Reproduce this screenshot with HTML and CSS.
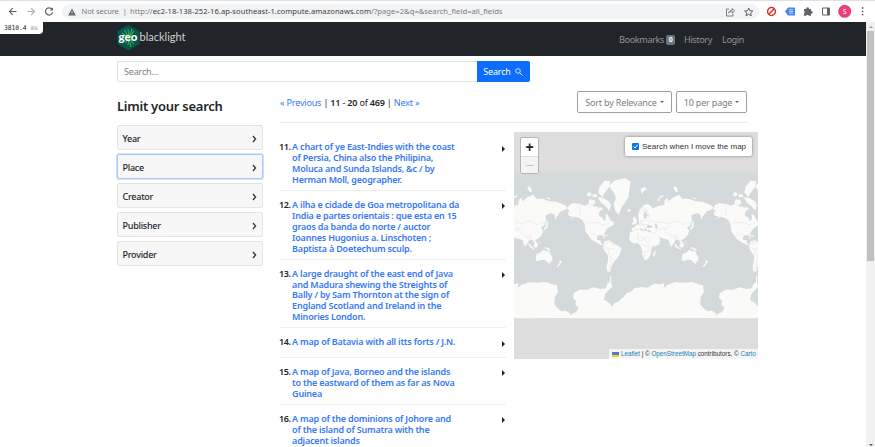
FILE: index.html
```html
<!DOCTYPE html>
<html lang="en">
<head>
<meta charset="utf-8">
<title>GeoBlacklight</title>
<link rel="stylesheet" href="styles.css">
</head>
<body>
<header class="chrome">
  <svg class="nav-icons" width="62" height="22" viewBox="0 0 62 22" fill="none" stroke="#5f6368" stroke-width="1.2"><path d="M16.5 11.5H9.5M12.8 8.2l-3.3 3.3 3.3 3.3"/><path stroke="#aeb1b4" d="M27.5 11.5h7M31.2 8.2l3.3 3.3-3.3 3.3"/><path d="M52 9.3a3.6 3.6 0 1 0 .6 3"/><path d="M53 7.2v3.2h-3.2z" fill="#5f6368" stroke="none"/></svg>
  <div class="address">
    <svg width="8" height="8" viewBox="0 0 8 8"><path fill="#5f6368" d="M4 .4 7.8 7.4H.2z"/><path stroke="#f1f3f4" stroke-width=".8" d="M4 3v2M4 5.8v.8"/></svg>
    <span class="insecure">Not secure</span><span class="bar">|</span>
    <span class="url">http://<b>ec2-18-138-252-16.ap-southeast-1.compute.amazonaws.com</b>/?page=2&amp;q=&amp;search_field=all_fields</span>
    <svg class="address-icons" width="30" height="12" viewBox="0 0 30 12" fill="none" stroke="#5f6368" stroke-width=".8"><path d="M4 3H1.5v7H8V7.8M3.5 7c.5-2 2-2.9 3.8-2.9V2.5l2.3 2.4-2.3 2.3V5.7C5.6 5.7 4.5 6 3.5 7z"/><path d="m23.7 2 1.2 2.7 2.9.3-2.2 1.9.7 2.9-2.6-1.5-2.6 1.5.7-2.9L19.6 5l2.9-.3z" stroke-width="1"/></svg>
  </div>
  <svg class="extensions" width="108" height="22" viewBox="767 0 108 22"><g fill="none" stroke="#d93025" stroke-width="1.5"><circle cx="771.5" cy="11.5" r="3.9"/><path d="m769 14 5-5"/></g><path fill="#4285f4" d="m785 11.5 3-4h7v8h-7z"/><path stroke="#dceaff" d="M789 9.8h4M789 11.5h4M789 13.2h4" stroke-width=".8"/><path fill="#5f6368" d="M804 9h2.3a1.4 1.4 0 1 1 2.7 0h2v2.2a1.3 1.3 0 1 1 0 2.5v2h-2.2a1.4 1.4 0 0 0-2.6 0H804v-2.3a1.3 1.3 0 0 0 0-2.3z"/><path fill="none" stroke="#5f6368" d="M822.5 8h7v7h-7z"/><path fill="#5f6368" d="M827 8h3v7h-3z"/><circle cx="844.7" cy="11.3" r="6.5" fill="#ec407a"/><text class="avatar" x="844.7" y="13.8">S</text><g fill="#5f6368"><circle cx="862.6" cy="8" r=".9"/><circle cx="862.6" cy="11.3" r=".9"/><circle cx="862.6" cy="14.6" r=".9"/></g></svg>
</header>
<div class="viewport">
  <div class="page">
    <nav class="navbar">
      <div class="timer">3810.4 <span>ms</span></div>
      <div class="logo">
        <svg width="24" height="26" viewBox="0 0 24 26"><path fill="#07554c" d="M11.5 0 22.5 6v13L11.5 25.5.5 19V6z"/><path d="m12 13-1-9M12 13 7.5 5M12 13 15 4M12 13l5-7M12 13l2 9M12 13l-4 5M12 13l5 6M12 13l-1 7M12 13 5 8" stroke="#32b44a" stroke-width="1.1"/></svg>
        <strong>geo</strong><span>blacklight</span>
      </div>
      <div class="links"><span class="bookmarks">Bookmarks</span><span class="badge">0</span><span class="history">History</span><span class="login">Login</span></div>
    </nav>
    <div class="container">
      <div class="search"><div class="input">Search...</div><div class="submit">Search <svg width="8" height="8" viewBox="0 0 8 8" fill="none" stroke="#fff" stroke-width=".8"><circle cx="3" cy="3" r="2.3"/><path d="m4.8 4.8 2.7 2.7"/></svg></div></div>
      <div class="columns">
        <aside>
          <h2>Limit your search</h2>
          <div class="facet">Year<svg width="5" height="8" viewBox="0 0 5 8"><path d="m1 1 2.6 3L1 7"/></svg></div>
          <div class="facet focus">Place<svg width="5" height="8" viewBox="0 0 5 8"><path d="m1 1 2.6 3L1 7"/></svg></div>
          <div class="facet">Creator<svg width="5" height="8" viewBox="0 0 5 8"><path d="m1 1 2.6 3L1 7"/></svg></div>
          <div class="facet">Publisher<svg width="5" height="8" viewBox="0 0 5 8"><path d="m1 1 2.6 3L1 7"/></svg></div>
          <div class="facet">Provider<svg width="5" height="8" viewBox="0 0 5 8"><path d="m1 1 2.6 3L1 7"/></svg></div>
        </aside>
        <main>
          <div class="toolbar">
            <div class="paging"><a>« Previous</a> | <b>11</b> - <b>20</b> of <b>469</b> | <a>Next »</a></div>
            <div class="select sort">Sort by Relevance</div><div class="select per">10 per page</div>
          </div>
          <div class="content">
            <div class="results">
              <article><span>11.</span><a>A chart of ye East-Indies with the coast<br>of Persia, China also the Philipina,<br>Moluca and Sunda Islands, &amp;c / by<br>Herman Moll, geographer.</a><i></i></article>
              <article><span>12.</span><a>A ilha e cidade de Goa metropolitana da<br>India e partes orientais : que esta en 15<br>graos da banda do norte / auctor<br>Ioannes Hugonius a. Linschoten ;<br>Baptista à Doetechum sculp.</a><i></i></article>
              <article><span>13.</span><a>A large draught of the east end of Java<br>and Madura shewing the Streights of<br>Bally / by Sam Thornton at the sign of<br>England Scotland and Ireland in the<br>Minories London.</a><i></i></article>
              <article class="single"><span>14.</span><a>A map of Batavia with all itts forts / J.N.</a><i></i></article>
              <article><span>15.</span><a>A map of Java, Borneo and the islands<br>to the eastward of them as far as Nova<br>Guinea</a><i></i></article>
              <article><span>16.</span><a>A map of the dominions of Johore and<br>of the island of Sumatra with the<br>adjacent islands</a><i></i></article>
            </div>
            <div class="map">
              <svg width="244" height="227" viewBox="0 0 732 681">
                <defs>
                  <g id="world">
                    <g transform="translate(-12 114)" fill="#fafaf8">
                      <path d="M177 105l12-5 20 1 15 6 14-6 10 7 14 2 12 8-7 10 1 10 9 5 6 11 5-10-2-12 7 2 7 13 8 12 5 5-11 5-9 6-8 10-4 8 4 14-4-2-3-9-13 0-5 8 2 7 9-1 2 9 8 5-6 2-17-9-15-9-8-12-9-12-2-20-6-13-12-8-12-3-16 9 10-9-11-3-4-8 7-6-8-4z"/>
                      <path d="M297 48l18-17 30-7 17 11-3 20-4 27-10 17-9 11-10 25-10-12-5-22 7-17-8-17zM268 51l16-19 17 2-5 19-11 14-8 14-12-13zM263 82l15 1 17 10 8 12-5 18-12-15-13-10zM239 88l14 2 4 9-10 7-12-6zM229 75l8-9 9 6-7 8zM249 72l13 2-2 8-12-1zM267 113l8-2 4 7-8 4zM350 119l10-2 3 5-8 4zM300 157l9-3 5 5-8 4zM276 191l14 4 6 5-8-1z"/>
                      <path d="M284 214l14-3 17 12 20 12-5 16-8 14-10 10-8 15-4 16-9-3-1-14 4-19 0-14-10-12-5-12z"/>
                    </g>
                    <g transform="translate(363 114)" fill="#fafaf8">
                      <path d="M9 134l5-14 12-14 11-4 10 7 7 6 16-7 18-4 1-14 8-7 4 11 15-13 17-7 9 12 20 0 19 8 20 1 25 9 11 10-12 7-10 3-10 14-7 11-1-15-12-4-16 6 2 15-5 15-10 7 7 9-5 14-11 10-9 4 8 14-3 5-12-18-9-2-13 21-9-20-11-4-18-4 5 8-3 12-14 8-10-24-4-9-7-3-3-5-9 3-7-13-8 0 8 12-4 4-9-10-12 14-10-2 1-11 9-2-5-8 9-4 6-8 9-1-2-9z"/>
                      <path fill="#d4dadc" d="M-6 181l16-5 5 3 1-6 10 8 3-3 2-6 5 9 10 0v8l-13-1-4 4-8-5-10-2z"/>
                      <path d="M-5 184l7-4 11-2 9 5 11-1 11 5 5 17 8 9 7-2-5 12-9 10-2 18-8 16-11 4-7-16-1-14-4-13-9-9-12 1-10-6-4-11z"/>
                      <path d="M57 246l5-5-1 13-6 7-2-7zM-11 161l6-5-2-12 7-4 6 10 0 10-13 4zM67 91l8-12 10-4 1 3-11 7-4 9zM17 56l12-5 6 7-9 5-5 10zM119 49l6 3 4 13-7 0-7-11zM171 80l9 4 7 3-10 1zM173 150l4 7-1 14-8 9-4-3 7-8zM116 217l13 13 10 8-3 1-14-8zM134 224l10-8 4 8-6 9-8-2zM151 211l5 10-4-2zM165 231l15 4 8 6-9-1-12-5z"/>
                      <path d="M142 253l11-5 9-8 8 2 5 4 3-9 6 14 7 12-3 11-9 5-12-9-10-1-12 5-5-3zM178 277l6 0-2 6zM212 270l7 4-5 9-7 8-4-2 8-9zM103 220l3 4-3 1z"/>
                      <g fill="#d4dadc"><path d="M32 119l-7 13 2 14 6-1 4-7 9-1-10-3-2-6zM34 169l7-5 13 5-8 6-10-2zM59 161l7 2 2 14-7-2z"/></g>
                      <g fill="none" stroke="#f1e0e4" stroke-width="1.8"><path d="M15 133l13-20 9 8 5 24-13 8-15 0 7 12 18-1 8-16M0 166l18-5 13 7M48 152l17 6 15-2 20 6 17-10 15 4 12 9 9-9 17 5-4 13M63 184l12-6 18 0 12-11M91 184l11 9 11 6 16-3M111 198l10 10 5-12M-3 208l20-8 15 5 10-5M8 184l2 30 18-6 11 10 9-12M19 225l15 4 12-4M22 247l18-4 8-12M30 246l-2 20M45 180l12 12 7-8M125 199l11 17M92 178l-13-10"/></g>
                    </g>
                    <g transform="translate(-12 114)" fill="none" stroke="#f1e0e4" stroke-width="1.8"><path d="M209 102v31M228 158h38l13 7 21-7M239 188l22 8M286 221l13-6 16 10M283 233l14 4-1 15 8 10-2 19-6 20M296 234l18 3"/></g>
                    <path transform="translate(-12 402)" fill="#fafaf8" d="M172 165l12-20 15-8 7-12-10-9 2-12-9-9 2-13 18-11 22 0 19-7 21 5 17-2 4-13 8-6 0-14 4-6-1 20 4 14-13 13-8 9-4 17 15 9 9 12 8-11 10-4 16-13 11-13 14-5 8-9 23-4 17 2 19-12 19 2 12-4-2 15 12-10 10-3 11-4 24 1 28-2 19 7 14 3 3 20-10 15-1 22 11 13 10 8 14-2 13 9v14z"/>
                  </g>
                </defs>
                <path fill="#d4dadc" d="M0 122h732v437H0z"/>
                <use href="#world" x="-438"/><use href="#world"/><use href="#world" x="438"/>
                <path fill="#ddd" d="M0 559h732v122H0z"/>
              </svg>
              <div class="zoom"><span>+</span><span>−</span></div>
              <div class="move"><svg width="7" height="7" viewBox="0 0 7 7"><rect width="7" height="7" rx="1" fill="#0875e8"/><path d="m1.4 3.5 1.5 1.6 2.8-3.4" fill="none" stroke="#fff"/></svg><span>Search when I move the map</span></div>
              <div class="credit"><i></i><span><a>Leaflet</a> | © <a>OpenStreetMap</a> contributors, © <a>Carto</a></span></div>
            </div>
          </div>
        </main>
      </div>
    </div>
  </div>
  <div class="scrollbar"><i class="up"></i><div></div><i class="down"></i></div>
</div>
</body>
</html>
```
FILE: styles.css
```css
* { box-sizing: border-box; }
body { margin: 0; height: 447px; overflow: hidden; background: #fff; color: #212529; font: 9px/11px "Noto Sans", sans-serif; letter-spacing: -.18px; }
svg { display: block; flex: none; }
.chrome { height: 22px; display: flex; border-top: 1px solid #dee1e6; background: #fff; }
.chrome > svg { margin-top: -1px; }
.address { width: 697px; height: 15px; margin-top: 3px; border-radius: 8px; background: #f1f3f4; display: flex; align-items: center; padding-left: 6px; white-space: nowrap; color: #777b80; font-size: 7.6px; letter-spacing: .035px; }
.insecure { margin-left: 5.5px; letter-spacing: -.14px; }
.bar { margin: 0 3px 0 4px; }
.url b { font-weight: 400; color: #3c4043; }
.address-icons { margin-left: auto; margin-right: 4px; }
.extensions { margin-left: 8px; }
.avatar { fill: #fff; font: 7px "Noto Sans", sans-serif; text-anchor: middle; }
.viewport { height: 425px; display: flex; }
.page { width: 866px; overflow: hidden; }
.navbar { height: 34px; background: #212529; display: flex; position: relative; }
.timer { position: absolute; left: 0; top: 0; width: 43px; height: 12px; background: #fff; border-radius: 0 0 4px 0; padding-left: 4px; font: 6.4px/12px "DejaVu Sans Mono", monospace; letter-spacing: -.08px; white-space: nowrap; }
.timer span { color: #999; }
.logo { display: flex; margin: 3px 0 0 117px; width: 74px; position: relative; font: 11px/24px Lato, sans-serif; letter-spacing: 0; color: #ced0d2; }
.logo strong { position: absolute; left: 1.5px; top: 0; color: #fff; font-size: 11.5px; font-weight: 900; }
.logo > span { margin-left: -1.5px; white-space: nowrap; }
.links { display: flex; align-items: center; margin-left: 428px; color: #909294; font-size: 9.2px; letter-spacing: -.42px; padding-top: 1px; }
.bookmarks { width: 45px; }
.badge { width: 9px; height: 10px; margin-left: 2px; border-radius: 2px; background: #6c757d; color: #fff; font-size: 7px; font-weight: 700; line-height: 10px; text-align: center; }
.history { margin-left: 9px; width: 29px; }
.login { margin-left: 9px; }
.container { margin-left: 117px; }
.search { display: flex; margin-top: 5px; height: 21px; }
.input { width: 360px; border: 1px solid #e2e5e8; border-right: 0; border-radius: 2px 0 0 2px; padding-left: 6px; line-height: 20px; color: #7b8188; }
.submit { width: 53px; border-radius: 0 2px 2px 0; background: #0d6efd; color: #fff; display: flex; align-items: center; justify-content: center; gap: 4px; }
.submit svg { margin-right: 1px; }
.columns { display: flex; }
aside { width: 146px; margin-right: 16px; }
h2 { font-size: 13px; line-height: 16px; font-weight: 600; letter-spacing: -.25px; margin: 16px 0 11px; white-space: nowrap; }
.facet { height: 25px; margin-bottom: 4px; border: 1px solid #e4e4e4; border-radius: 2px; background: #f7f7f7; display: flex; align-items: center; justify-content: space-between; padding: 2px 5px 0 4.5px; font-weight: 500; letter-spacing: -.25px; }
.facet svg { fill: none; stroke: #333; stroke-width: 1.3; }
.focus { border-color: #a9c8f7; box-shadow: 0 0 0 1px #cfe2ff; }
main { width: 480px; }
.toolbar { height: 41px; width: 469px; border-bottom: 1px solid #eaebec; display: flex; padding-top: 9px; }
.paging { width: 298px; padding: 6px 0 0 1px; white-space: nowrap; }
.paging b { font-weight: 600; }
a { color: #3579f6; }
.select { height: 22px; border: 1px solid #9aa0a5; border-radius: 2px; color: #7a8087; display: flex; align-items: center; justify-content: center; gap: 3px; white-space: nowrap; }
.select::after { content: ""; border: 2.5px solid transparent; border-top-color: #5d636a; border-bottom: 0; }
.sort { width: 95px; margin-right: 4px; }
.per { width: 71px; }
.content { display: flex; gap: 8px; margin-top: 9px; }
.results { width: 227px; padding-top: 10px; }
article { display: flex; border-bottom: 1px solid #f0f0f1; padding-bottom: 4px; margin-bottom: 9px; font-weight: 600; line-height: 10.95px; letter-spacing: -.2px; }
article > span { margin-right: 1.5px; letter-spacing: -.4px; }
article > a { white-space: nowrap; }
article > i { margin: 3.5px 1px 0 auto; width: 3px; height: 6px; border: 3px solid transparent; border-left-color: #222; border-right: 0; }
.single { min-height: 20.5px; }
.map { width: 244px; height: 227px; background: #ddd; position: relative; letter-spacing: 0; }
.zoom { position: absolute; left: 6px; top: 5px; width: 19px; height: 37px; border: 1px solid #b5b5b5; border-radius: 2px; background: #fff; font: 700 14px/18px "Liberation Sans", sans-serif; text-align: center; }
.zoom span { display: block; height: 18px; }
.zoom span + span { background: #f4f4f4; color: #c4c4c4; line-height: 16px; height: 17px; border-top: 1px solid #ddd; font-weight: 400; }
.move { position: absolute; right: 6px; top: 5px; width: 127px; height: 19px; background: #fff; border-radius: 2px; box-shadow: 0 0 3px #777; display: flex; align-items: center; gap: 3px; padding-left: 7px; font: 8px/10px "Liberation Sans", sans-serif; white-space: nowrap; color: #333; }
.credit { position: absolute; right: 0; bottom: 0; width: 149px; height: 10px; background: #f5f5f5; display: flex; align-items: center; gap: 2px; padding-left: 3px; font: 6.3px/10px "Liberation Sans", sans-serif; white-space: nowrap; color: #333; }
.credit i { width: 7px; height: 5px; background: linear-gradient(#4c7be1 50%, #ffd500 50%); }
.credit a { color: #1682b5; }
.scrollbar { width: 9px; background: #f1f1f1; display: flex; flex-direction: column; align-items: center; padding: 4px 0 1px; }
.scrollbar div { width: 7px; height: 230px; background: #c1c1c1; margin: 3px 0 auto; }
.scrollbar i { border: 2px solid transparent; }
.scrollbar .up { border-bottom-color: #999; border-top: 0; }
.scrollbar .down { border-top-color: #555; border-bottom: 0; }
```
